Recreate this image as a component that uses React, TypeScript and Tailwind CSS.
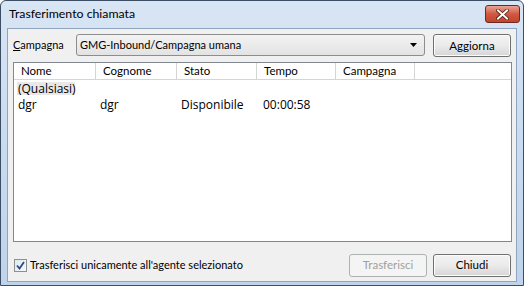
import React from 'react';

const cols = [
  { label: 'Nome', w: 'w-[82px]' },
  { label: 'Cognome', w: 'w-[81px]' },
  { label: 'Stato', w: 'w-[80px]' },
  { label: 'Tempo', w: 'w-[79px]' },
  { label: 'Campagna', w: 'w-[79px]' },
];

const rows = [
  { nome: 'dgr', cognome: 'dgr', stato: 'Disponibile', tempo: '00:00:58', campagna: '' },
];

// Bottone stile Windows 7
const WinButton: React.FC<{ label: string; disabled?: boolean; w: string }> = ({ label, disabled, w }) => (
  <div
    className={`${w} h-[23px] flex items-center justify-center rounded-[3px] border text-[11.5px] ${
      disabled
        ? 'border-[#adb2b5] bg-[#f4f4f4] text-[#a0a0a0]'
        : 'border-[#707070] bg-gradient-to-b from-[#f2f2f2] via-[#ebebeb] to-[#d5d5d5] text-black shadow-[inset_0_0_0_1px_#fcfcfc]'
    }`}
  >
    {label}
  </div>
);

export default function App() {
  return (
    <div className="w-[524px] h-[286px] bg-white font-['Lato',sans-serif]">
      <div className="w-[524px] h-[286px] border border-[#3c4e63] rounded-t-[6px] bg-gradient-to-b from-[#d8e5f4] via-[#c9dbf0] to-[#bfd3ec] flex flex-col px-[6px] pb-[3px]">
        {/* Barra del titolo */}
        <div className="h-[27px] flex items-start justify-between">
          <span className="pt-[4px] pl-[2px] text-[12.3px] text-black">Trasferimento chiamata</span>
          <div className="mt-[4px] -mr-[3px] w-[35px] h-[18px] rounded-[3px] border border-[#6d2a22] bg-gradient-to-b from-[#e8a595] via-[#d2573f] to-[#c0452c] flex items-center justify-center">
            <svg width="13" height="11" viewBox="0 0 13 11">
              <path d="M2 1.5 L11 9.5 M11 1.5 L2 9.5" stroke="#4b1e17" strokeWidth="3.6" strokeLinecap="square" />
              <path d="M2 1.5 L11 9.5 M11 1.5 L2 9.5" stroke="#ffffff" strokeWidth="2" strokeLinecap="square" />
            </svg>
          </div>
        </div>

        {/* Area client */}
        <div className="flex-1 border border-[#8ea4bf] bg-[#f0f0f0] flex flex-col pl-[5px] pt-[5px] text-[11px]">
          <div className="flex items-start h-[23px]">
            <span className="w-[63px] h-[22px] flex items-center text-black">
              <span className="underline">C</span>ampagna
            </span>
            <div className="w-[349px] h-[22px] rounded-[3px] border border-[#8d8d8d] bg-gradient-to-b from-[#f3f3f3] to-[#e3e3e3] flex items-center justify-between pl-[3px] pr-[7px]">
              <span className="text-black">GMG-Inbound/Campagna umana</span>
              <svg width="7" height="4" viewBox="0 0 7 4">
                <path d="M0 0 H7 L3.5 4 Z" fill="#000" />
              </svg>
            </div>
            <div className="ml-[8px]">
              <WinButton label="Aggiorna" w="w-[78px]" />
            </div>
          </div>

          {/* Lista agenti */}
          <div className="mt-[5px] w-[499px] h-[180px] border border-[#828790] bg-white flex flex-col text-black">
            <div className="flex h-[17px] border-b border-[#d5d5d5]">
              {cols.map((c) => (
                <div key={c.label} className={`${c.w} h-full border-r border-[#d5d5d5] flex items-center pl-[7px] text-[11.5px]`}>
                  {c.label}
                </div>
              ))}
              <div className="flex-1" />
            </div>
            <div className="flex h-[13px] mt-[2px]">
              <div className="ml-[3px] w-[58px] bg-[#e8e8e8] pl-[1px] font-['Open_Sans',sans-serif] text-[12px] leading-[13px]">(Qualsiasi)</div>
            </div>
            {rows.map((r) => (
              <div key={r.nome} className="flex h-[17px] mt-[1px] items-center font-['Open_Sans',sans-serif] text-[12px]">
                <div className="w-[82px] pl-[4px]">{r.nome}</div>
                <div className="w-[81px] pl-[4px]">{r.cognome}</div>
                <div className="w-[80px] pl-[4px]">{r.stato}</div>
                <div className="w-[79px] pl-[6px]">{r.tempo}</div>
                <div className="w-[79px] pl-[6px]">{r.campagna}</div>
              </div>
            ))}
          </div>

          <div className="mt-[11px] h-[24px] flex items-center">
            <div className="flex items-center gap-[3px] pl-[1px]">
              <div className="w-[13px] h-[13px] border border-[#8e8f8f] bg-gradient-to-br from-[#dfe8f2] to-[#f5f8fb] flex items-center justify-center">
                <svg width="9" height="9" viewBox="0 0 9 9">
                  <path d="M1 4.5 L3.5 7.5 L8 1" stroke="#2a4a84" strokeWidth="1.8" fill="none" />
                </svg>
              </div>
              <span className="text-black">Trasferisci unicamente all'agente selezionato</span>
            </div>
            <div className="ml-auto mr-[5px] flex gap-[6px]">
              <WinButton label="Trasferisci" disabled w="w-[78px]" />
              <WinButton label="Chiudi" w="w-[78px]" />
            </div>
          </div>
        </div>
      </div>
    </div>
  );
}
